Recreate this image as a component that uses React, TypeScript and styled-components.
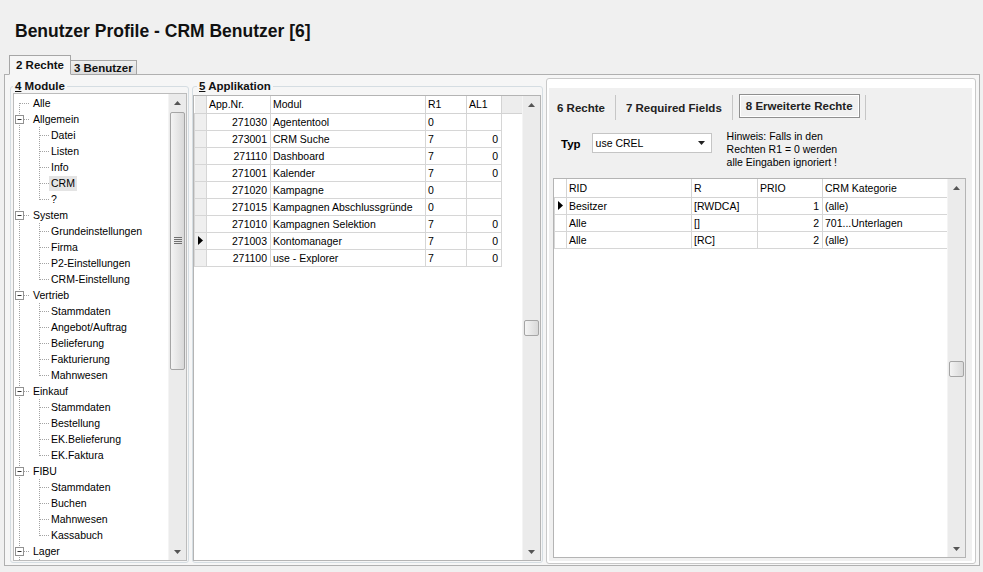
import React from "react";
import styled, { createGlobalStyle } from "styled-components";

const GlobalStyle = createGlobalStyle`
  html, body { margin: 0; padding: 0; background: #f0f0f0; }
  body {
    font-family: "Liberation Sans", Arial, sans-serif;
    font-size: 10.5px;
    color: #000;
  }
  #root { width: 983px; height: 572px; overflow: hidden; }
`

type TreeNode = { label: string, level: 0 | 1, open?: boolean, last?: boolean, first?: boolean, selected?: boolean }

const treeData: TreeNode[] = [
    { label: 'Alle', level: 0, first: true },
    { label: 'Allgemein', level: 0, open: true },
    { label: 'Datei', level: 1 },
    { label: 'Listen', level: 1 },
    { label: 'Info', level: 1 },
    { label: 'CRM', level: 1, selected: true },
    { label: '?', level: 1, last: true },
    { label: 'System', level: 0, open: true },
    { label: 'Grundeinstellungen', level: 1 },
    { label: 'Firma', level: 1 },
    { label: 'P2-Einstellungen', level: 1 },
    { label: 'CRM-Einstellung', level: 1, last: true },
    { label: 'Vertrieb', level: 0, open: true },
    { label: 'Stammdaten', level: 1 },
    { label: 'Angebot/Auftrag', level: 1 },
    { label: 'Belieferung', level: 1 },
    { label: 'Fakturierung', level: 1 },
    { label: 'Mahnwesen', level: 1, last: true },
    { label: 'Einkauf', level: 0, open: true },
    { label: 'Stammdaten', level: 1 },
    { label: 'Bestellung', level: 1 },
    { label: 'EK.Belieferung', level: 1 },
    { label: 'EK.Faktura', level: 1, last: true },
    { label: 'FIBU', level: 0, open: true },
    { label: 'Stammdaten', level: 1 },
    { label: 'Buchen', level: 1 },
    { label: 'Mahnwesen', level: 1 },
    { label: 'Kassabuch', level: 1, last: true },
    { label: 'Lager', level: 0, open: true },
    { label: '', level: 1 }, // next child, only its guide lines peek out under the fold
]

const appRows = [
    { nr: '271030', modul: 'Agententool', r1: '0', al1: '' },
    { nr: '273001', modul: 'CRM Suche', r1: '7', al1: '0' },
    { nr: '271110', modul: 'Dashboard', r1: '7', al1: '0' },
    { nr: '271001', modul: 'Kalender', r1: '7', al1: '0' },
    { nr: '271020', modul: 'Kampagne', r1: '0', al1: '' },
    { nr: '271015', modul: 'Kampagnen Abschlussgründe', r1: '0', al1: '' },
    { nr: '271010', modul: 'Kampagnen Selektion', r1: '7', al1: '0' },
    { nr: '271003', modul: 'Kontomanager', r1: '7', al1: '0', current: true },
    { nr: '271100', modul: 'use - Explorer', r1: '7', al1: '0' },
]

const rightRows = [
    { rid: 'Besitzer', r: '[RWDCA]', prio: '1', kat: '(alle)', current: true },
    { rid: 'Alle', r: '[]', prio: '2', kat: '701...Unterlagen' },
    { rid: 'Alle', r: '[RC]', prio: '2', kat: '(alle)' },
]


const App = () => {
    return <Page>
        <GlobalStyle/>
        <Title>Benutzer Profile - CRM Benutzer [6]</Title>

        <TabStrip>
            <PageTab $active>2 Rechte</PageTab>
            <PageTab>3 Benutzer</PageTab>
        </TabStrip>

        <TabBody>
            <Group $width={179} $pad="0 1px 1px 2px">
                <Legend $indent={0}><u>4</u> Module</Legend>
                <TreeFrame>
                    <TreeItems>
                        { treeData.map((it, i) => <TreeRow key={i} node={it}/>) }
                    </TreeItems>
                    <Scrollbar top={1} size={258} grip/>
                </TreeFrame>
            </Group>

            <Group $width={351} $pad="0 1px 1px 0">
                <Legend $indent={4}><u>5</u> Applikation</Legend>
                <GridFrame $top={2}>
                    <GridArea>
                        <Table>
                            <colgroup>
                                <col style={{ width: 12 }}/>
                                <col style={{ width: 64 }}/>
                                <col style={{ width: 155 }}/>
                                <col style={{ width: 41 }}/>
                                <col style={{ width: 35 }}/>
                                <col/>
                            </colgroup>
                            <thead>
                                <HeadRow $h={17}>
                                    <HeadCell $gray/>
                                    <HeadCell>App.Nr.</HeadCell>
                                    <HeadCell>Modul</HeadCell>
                                    <HeadCell>R1</HeadCell>
                                    <HeadCell>AL1</HeadCell>
                                    <HeadCell $gray $filler/>
                                </HeadRow>
                            </thead>
                            <tbody>
                                { appRows.map(it => <BodyRow key={it.nr}>
                                    <RowHead $gray>{ it.current && <RowPointer/> }</RowHead>
                                    <Cell $align="right">{it.nr}</Cell>
                                    <Cell>{it.modul}</Cell>
                                    <Cell>{it.r1}</Cell>
                                    <Cell $align="right">{it.al1}</Cell>
                                    <FillerCell/>
                                </BodyRow>) }
                            </tbody>
                        </Table>
                    </GridArea>
                    <Scrollbar top={207} size={16}/>
                </GridFrame>
            </Group>

            <RightPanel>
                <InnerTabs>
                    <SubTabBar>
                        <SubTab $first>6 Rechte</SubTab>
                        <SubTab>7 Required Fields</SubTab>
                        <SubTab $active>8 Erweiterte Rechte</SubTab>
                        <SubTabEnd/>
                    </SubTabBar>

                    <TypRow>
                        <TypLabel>Typ</TypLabel>
                        <Combo>
                            <span>use CREL</span>
                            <svg width="7" height="4" viewBox="0 0 7 4"><path d="M0 0h7L3.5 4z" fill="#222"/></svg>
                        </Combo>
                        <Hint>
                            Hinweis: Falls in den<br/>
                            Rechten R1 = 0 werden<br/>
                            alle Eingaben ignoriert !
                        </Hint>
                    </TypRow>

                    <RightGrid>
                        <GridArea>
                            <Table>
                                <colgroup>
                                    <col style={{ width: 12 }}/>
                                    <col style={{ width: 125 }}/>
                                    <col style={{ width: 66 }}/>
                                    <col style={{ width: 65 }}/>
                                    <col style={{ width: 126 }}/>
                                </colgroup>
                                <thead>
                                    <HeadRow $h={18}>
                                        <HeadCell/>
                                        <HeadCell>RID</HeadCell>
                                        <HeadCell>R</HeadCell>
                                        <HeadCell>PRIO</HeadCell>
                                        <HeadCell>CRM Kategorie</HeadCell>
                                    </HeadRow>
                                </thead>
                                <tbody>
                                    { rightRows.map((it, i) => <BodyRow key={i}>
                                        <RowHead>{ it.current && <RowPointer/> }</RowHead>
                                        <Cell>{it.rid}</Cell>
                                        <Cell>{it.r}</Cell>
                                        <Cell $align="right">{it.prio}</Cell>
                                        <Cell>{it.kat}</Cell>
                                    </BodyRow>) }
                                </tbody>
                            </Table>
                        </GridArea>
                        <Scrollbar top={165} size={16}/>
                    </RightGrid>
                </InnerTabs>
            </RightPanel>
        </TabBody>
    </Page>
}
export default App




const Page = styled.div`
  width: 983px; height: 572px;
  display: flex; flex-direction: column;
  background: #f0f0f0;
`

const Title = styled.h1`
  margin: 0;
  padding: 21px 0 0 15px;
  height: 20px;
  font: bold 17.5px/20px "Liberation Sans", Arial, sans-serif;
  color: #111;
`

const TabStrip = styled.div`
  margin-top: 14px;
  height: 20px;
  padding-left: 9px;
  display: flex; align-items: flex-end;
  position: relative; z-index: 1;
  margin-bottom: -1px;
`

const PageTab = styled.div<{ $active?: boolean }>`
  box-sizing: border-box;
  height: ${p => p.$active ? 20 : 15}px;
  padding: 0 ${p => p.$active ? 6 : 3}px;
  display: flex; align-items: center;
  font: bold 11.5px "Liberation Sans", Arial, sans-serif;
  border: 1px solid #a6a6a6;
  border-bottom: ${p => p.$active ? '1px solid #f6f6f6' : '1px solid #a6a6a6'};
  border-left-width: ${p => p.$active ? 1 : 0}px;
  background: ${p => p.$active ? '#f6f6f6' : 'linear-gradient(#f0f0f0, #dcdcdc)'};
  color: #111;
`

const TabBody = styled.div`
  flex: 1;
  margin: 0 3px 6px 4px;
  border: 1px solid #b0b0b0;
  background: #f6f6f6;
  display: flex; gap: 3px;
  padding: 0 3px 2px 5px;
  min-height: 0;
`

const Group = styled.fieldset<{ $width: number, $pad: string }>`
  margin: 4px 0 0;
  width: ${p => p.$width}px;
  box-sizing: border-box;
  padding: ${p => p.$pad};
  border: 1px solid #d5dde2;
  border-radius: 3px;
  min-width: 0;
  display: flex; flex-direction: column;
`

const Legend = styled.legend<{ $indent: number }>`
  margin-left: ${p => p.$indent}px;
  padding: 0 2px;
  font: bold 11.5px/14px "Liberation Sans", Arial, sans-serif;
  color: #111;
`

const TreeFrame = styled.div`
  flex: 1; min-height: 0;
  display: flex;
  background: #fff;
  border: 1px solid #bcbcbc;
  overflow: hidden;
`

const TreeItems = styled.div`
  flex: 1;
  overflow: hidden;
  padding-top: 1px;
`

const TreeLine = styled.div`
  height: 16px;
  display: flex; align-items: center;
  white-space: nowrap;
`

const TreeLabel = styled.span<{ $selected?: boolean }>`
  padding: 0 2px;
  line-height: 15px;
  background: ${p => p.$selected ? '#e4e4e4' : 'transparent'};
`

type TreeRowProps = { node: TreeNode }
let TreeRow = ({ node }: TreeRowProps) => {
    const w = node.level ? 35 : 17
    const dot = { stroke: '#a3a3a3', strokeWidth: 1, strokeDasharray: '1 1' }
    return <TreeLine>
        <svg width={w} height={16} style={{ flex: 'none' }}>
            <line x1={5.5} y1={node.first ? 8 : 0} x2={5.5} y2={16} {...dot}/>
            { node.level === 0 && <line x1={6} y1={8.5} x2={16} y2={8.5} {...dot}/> }
            { node.level === 0 && node.open && <g>
                <rect x={1.5} y={4.5} width={8} height={8} fill="#fff" stroke="#919191"/>
                <line x1={3.5} y1={8.5} x2={7.5} y2={8.5} stroke="#333"/>
            </g> }
            { node.level === 1 && <>
                <line x1={25.5} y1={0} x2={25.5} y2={node.last ? 9 : 16} {...dot}/>
                <line x1={26} y1={8.5} x2={35} y2={8.5} {...dot}/>
            </> }
        </svg>
        { node.label && <TreeLabel $selected={node.selected}>{node.label}</TreeLabel> }
    </TreeLine>
}
TreeRow = React.memo(TreeRow) as unknown as typeof TreeRow




const ScrollTrack = styled.div`
  width: 17px; flex: none;
  display: flex; flex-direction: column;
  background: #ebebeb;
  border-left: 1px solid #f4f4f4;
`

const ScrollButton = styled.div`
  height: 17px; flex: none;
  display: flex; align-items: center; justify-content: center;
`

const ScrollSpace = styled.div`
  flex: 1;
`

const ScrollThumb = styled.div<{ $top: number, $size: number }>`
  margin: ${p => p.$top}px 1px 0;
  height: ${p => p.$size}px;
  box-sizing: border-box;
  border: 1px solid #a5a5a5;
  border-radius: 2px;
  background: linear-gradient(to right, #f4f4f4, #d9d9d9);
  display: flex; align-items: center; justify-content: center;
`

type ScrollbarProps = { top: number, size: number, grip?: boolean }
let Scrollbar = ({ top, size, grip }: ScrollbarProps) => {
    return <ScrollTrack>
        <ScrollButton>
            <svg width="7" height="4" viewBox="0 0 7 4"><path d="M0 4h7L3.5 0z" fill="#555"/></svg>
        </ScrollButton>
        <ScrollSpace>
            <ScrollThumb $top={top} $size={size}>
                { grip && <svg width="8" height="8" viewBox="0 0 8 8">
                    <path d="M0 .5h8M0 2.5h8M0 4.5h8M0 6.5h8" stroke="#707070"/>
                </svg> }
            </ScrollThumb>
        </ScrollSpace>
        <ScrollButton>
            <svg width="7" height="4" viewBox="0 0 7 4"><path d="M0 0h7L3.5 4z" fill="#555"/></svg>
        </ScrollButton>
    </ScrollTrack>
}
Scrollbar = React.memo(Scrollbar) as unknown as typeof Scrollbar




const GridFrame = styled.div<{ $top: number }>`
  margin-top: ${p => p.$top}px;
  flex: 1; min-height: 0;
  display: flex;
  background: #fff;
  border: 1px solid #b4b4b4;
  overflow: hidden;
`

const GridArea = styled.div`
  flex: 1; min-width: 0;
  overflow: hidden;
`

const Table = styled.table`
  border-collapse: collapse;
  table-layout: fixed;
  width: 100%;
`

const HeadRow = styled.tr<{ $h: number }>`
  height: ${p => p.$h}px;
`

const HeadCell = styled.th<{ $gray?: boolean, $filler?: boolean }>`
  padding: 0 2px;
  text-align: left;
  font-weight: normal;
  white-space: nowrap;
  overflow: hidden;
  background: ${p => p.$gray ? '#ededed' : '#fff'};
  border-right: ${p => p.$filler ? 'none' : '1px solid #d3d3d3'};
  border-bottom: 1px solid #d3d3d3;
`

const BodyRow = styled.tr`
  height: 17px;
`

const Cell = styled.td<{ $align?: 'left' | 'right' }>`
  padding: 0 3px 0 2px;
  text-align: ${p => p.$align || 'left'};
  white-space: nowrap;
  overflow: hidden;
  border: 1px solid #d6d6d6;
`

const RowHead = styled.td<{ $gray?: boolean }>`
  padding: 0 0 0 3px;
  background: ${p => p.$gray ? '#efefef' : '#fff'};
  border: 1px solid #d6d6d6;
  line-height: 0;
`

const FillerCell = styled.td`
  border: none;
`

let RowPointer = () => <svg width="5" height="9" viewBox="0 0 5 9"><path d="M0 0l5 4.5L0 9z" fill="#000"/></svg>
RowPointer = React.memo(RowPointer) as unknown as typeof RowPointer




const RightPanel = styled.div`
  margin: 3px 0 -1px;
  width: 430px;
  box-sizing: border-box;
  border: 1px solid #c9c9c9;
  border-radius: 3px;
  background: #fff;
  padding: 9px 3px 2px 2px;
  display: flex; flex-direction: column;
`

const InnerTabs = styled.div`
  flex: 1; min-height: 0;
  background: #f0f0f0;
  display: flex; flex-direction: column;
`

const SubTabBar = styled.div`
  height: 32px;
  padding-left: 3px;
  display: flex; align-items: flex-end;
`

const SubTab = styled.div<{ $first?: boolean, $active?: boolean }>`
  box-sizing: border-box;
  height: ${p => p.$active ? 24 : 25}px;
  margin: ${p => p.$active ? '0 0 2px 6px' : '0'};
  padding: 0 ${p => p.$active ? 6 : 10}px 0 ${p => p.$first ? 5 : p.$active ? 6 : 10}px;
  display: flex; align-items: center;
  font: bold 11.5px "Liberation Sans", Arial, sans-serif;
  color: #222;
  border-right: ${p => p.$active ? '1px solid #8f8f8f' : '1px solid #c6c6c6'};
  border-top: ${p => p.$active ? '1px solid #8f8f8f' : 'none'};
  border-left: ${p => p.$active ? '1px solid #8f8f8f' : 'none'};
  border-bottom: ${p => p.$active ? '1px solid #8f8f8f' : 'none'};
  box-shadow: ${p => p.$active ? 'inset 1px 1px 0 #fff, inset -1px -1px 0 #fff' : 'none'};
`

const SubTabEnd = styled.div`
  width: 1px; height: 25px;
  margin-left: 5px;
  background: #c6c6c6;
`

const TypRow = styled.div`
  margin-top: 10px;
  padding-left: 12px;
  display: flex; align-items: flex-start;
`

const TypLabel = styled.div`
  margin: 7px 11px 0 0;
  font: bold 11.5px/14px "Liberation Sans", Arial, sans-serif;
`

const Combo = styled.div`
  margin-top: 3px;
  width: 120px; height: 20px;
  box-sizing: border-box;
  padding: 0 6px 0 3px;
  display: flex; align-items: center; justify-content: space-between;
  background: #fff;
  border: 1px solid #c5c5c5;
`

const Hint = styled.div`
  margin-left: 15px;
  line-height: 13px;
`

const RightGrid = styled(GridFrame)`
  margin: 9px 6px 3px 4px;
`
